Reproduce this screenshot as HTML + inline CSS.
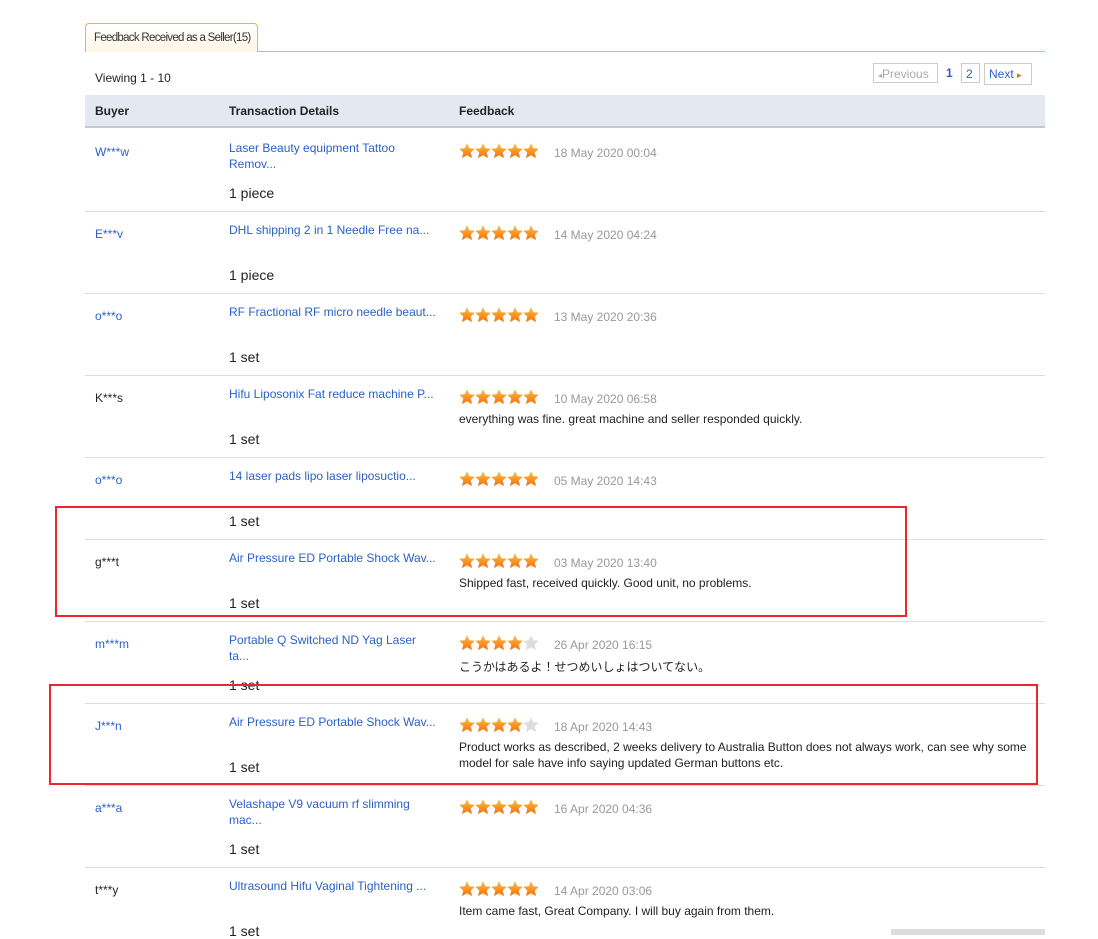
<!DOCTYPE html>
<html><head><meta charset="utf-8"><style>
*{margin:0;padding:0;box-sizing:border-box}
body{width:1098px;height:935px;overflow:hidden;background:#fff;font-family:"Liberation Sans","Noto Sans CJK JP",sans-serif;font-size:12px;color:#333;position:relative}
.a{position:absolute;white-space:nowrap}
.tabline{position:absolute;left:85px;top:51px;width:960px;height:1px;background:#f2b43c}
.tab{position:absolute;left:85px;top:23px;width:173px;height:29px;border:1px solid #f2b43c;border-bottom:none;border-radius:4px 4px 0 0;background:linear-gradient(#fff,#fff6e6);font-size:11.5px;letter-spacing:-0.7px;color:#333;padding:8px 0 0 8px;white-space:nowrap;overflow:hidden}
.hdr{position:absolute;left:85px;top:95px;width:960px;height:33px;background:#e4e8f0;border-bottom:2px solid #c4c9d6;font-weight:bold;color:#222}
.sep{position:absolute;left:85px;width:960px;height:1px;background:#ddd}
.lk{color:#2a60c8}
.b{color:#2a60c8;font-size:12px}
.q{font-size:14px;color:#222}
.d{color:#999;font-size:12px}
.c{color:#222;font-size:12px}
.pg{position:absolute;top:63px;height:20px;border:1px solid #ccc;font-size:12px;padding:3px 4px;white-space:nowrap}
.red{position:absolute;border:2px solid #e8282c}
</style></head><body>
<svg width="0" height="0" style="position:absolute"><defs>
<linearGradient id="g" x1="0" y1="0" x2="0" y2="1"><stop offset="0" stop-color="#ffc040"/><stop offset="1" stop-color="#f07010"/></linearGradient>
<symbol id="s" viewBox="0 0 16 16"><path d="M8 .3l2.3 5 5.5.5-4.1 3.7 1.3 5.6L8 12.2 3 15.1l1.3-5.6L.2 5.8l5.5-.5z" fill="url(#g)"/></symbol>
<symbol id="e" viewBox="0 0 16 16"><path d="M8 .3l2.3 5 5.5.5-4.1 3.7 1.3 5.6L8 12.2 3 15.1l1.3-5.6L.2 5.8l5.5-.5z" fill="#ddd"/></symbol>
</defs></svg>
<div class="tabline"></div>
<div class="tab">Feedback Received as a Seller(15)</div>
<div class="a" style="left:95px;top:71px;color:#222">Viewing 1 - 10</div>
<div class="pg" style="left:873px;color:#aaa;width:65px"><span style="font-size:8px">◂</span>Previous</div>
<div class="a" style="left:946px;top:66px;color:#2a60c8;font-weight:bold">1</div>
<div class="pg" style="left:961px;color:#2a60c8;width:19px">2</div>
<div class="pg" style="left:984px;color:#2a60c8;width:48px;height:22px">Next <span style="color:#f06010;font-size:9px">▸</span></div>
<div class="hdr"><span class="a" style="left:10px;top:9px">Buyer</span><span class="a" style="left:144px;top:9px">Transaction Details</span><span class="a" style="left:374px;top:9px">Feedback</span></div>
<div id="rows"></div>
<script>
var R=[["W***w","Laser Beauty equipment Tattoo","Remov...","1 piece",5,"18 May 2020 00:04","",""],
["E***v","DHL shipping 2 in 1 Needle Free na...","","1 piece",5,"14 May 2020 04:24","",""],
["o***o","RF Fractional RF micro needle beaut...","","1 set",5,"13 May 2020 20:36","",""],
["K***s","Hifu Liposonix Fat reduce machine P...","","1 set",5,"10 May 2020 06:58","everything was fine. great machine and seller responded quickly.",""],
["o***o","14 laser pads lipo laser liposuctio...","","1 set",5,"05 May 2020 14:43","",""],
["g***t","Air Pressure ED Portable Shock Wav...","","1 set",5,"03 May 2020 13:40","Shipped fast, received quickly. Good unit, no problems.",""],
["m***m","Portable Q Switched ND Yag Laser","ta...","1 set",4,"26 Apr 2020 16:15","こうかはあるよ！せつめいしょはついてない。",""],
["J***n","Air Pressure ED Portable Shock Wav...","","1 set",4,"18 Apr 2020 14:43","Product works as described, 2 weeks delivery to Australia Button does not always work, can see why some","model for sale have info saying updated German buttons etc."],
["a***a","Velashape V9 vacuum rf slimming","mac...","1 set",5,"16 Apr 2020 04:36","",""],
["t***y","Ultrasound Hifu Vaginal Tightening ...","","1 set",5,"14 Apr 2020 03:06","Item came fast, Great Company. I will buy again from them.",""]];
var h="";
R.forEach(function(r,i){var t=129+82*i;
var bc=(r[0]=="K***s"||r[0]=="g***t"||r[0]=="t***y")?"#222":"#2a60c8";
h+='<div class="a b" style="left:95px;top:'+(t+16)+'px;color:'+bc+'">'+r[0]+'</div>';
h+='<div class="a lk" style="left:229px;top:'+(t+12)+'px">'+r[1]+'</div>';
if(r[2])h+='<div class="a lk" style="left:229px;top:'+(t+28)+'px">'+r[2]+'</div>';
h+='<div class="a q" style="left:229px;top:'+(t+56)+'px">'+r[3]+'</div>';
var s="";for(var k=0;k<5;k++)s+='<svg width="16" height="16"><use href="#'+(k<r[4]?'s':'e')+'"/></svg>';
h+='<div class="a" style="left:459px;top:'+(t+14)+'px;display:flex">'+s+'</div>';
h+='<div class="a d" style="left:554px;top:'+(t+17)+'px">'+r[5]+'</div>';
if(r[6])h+='<div class="a c" style="left:459px;top:'+(t+37)+'px">'+r[6]+'</div>';
if(r[7])h+='<div class="a c" style="left:459px;top:'+(t+53)+'px">'+r[7]+'</div>';
if(i<9)h+='<div class="sep" style="top:'+(t+82)+'px"></div>';
});
document.getElementById("rows").innerHTML=h;
</script>
<div class="red" style="left:55px;top:506px;width:852px;height:111px"></div>
<div class="red" style="left:49px;top:684px;width:989px;height:101px"></div>
<div style="position:absolute;left:891px;top:929px;width:154px;height:6px;background:#ddd"></div>
</body></html>
